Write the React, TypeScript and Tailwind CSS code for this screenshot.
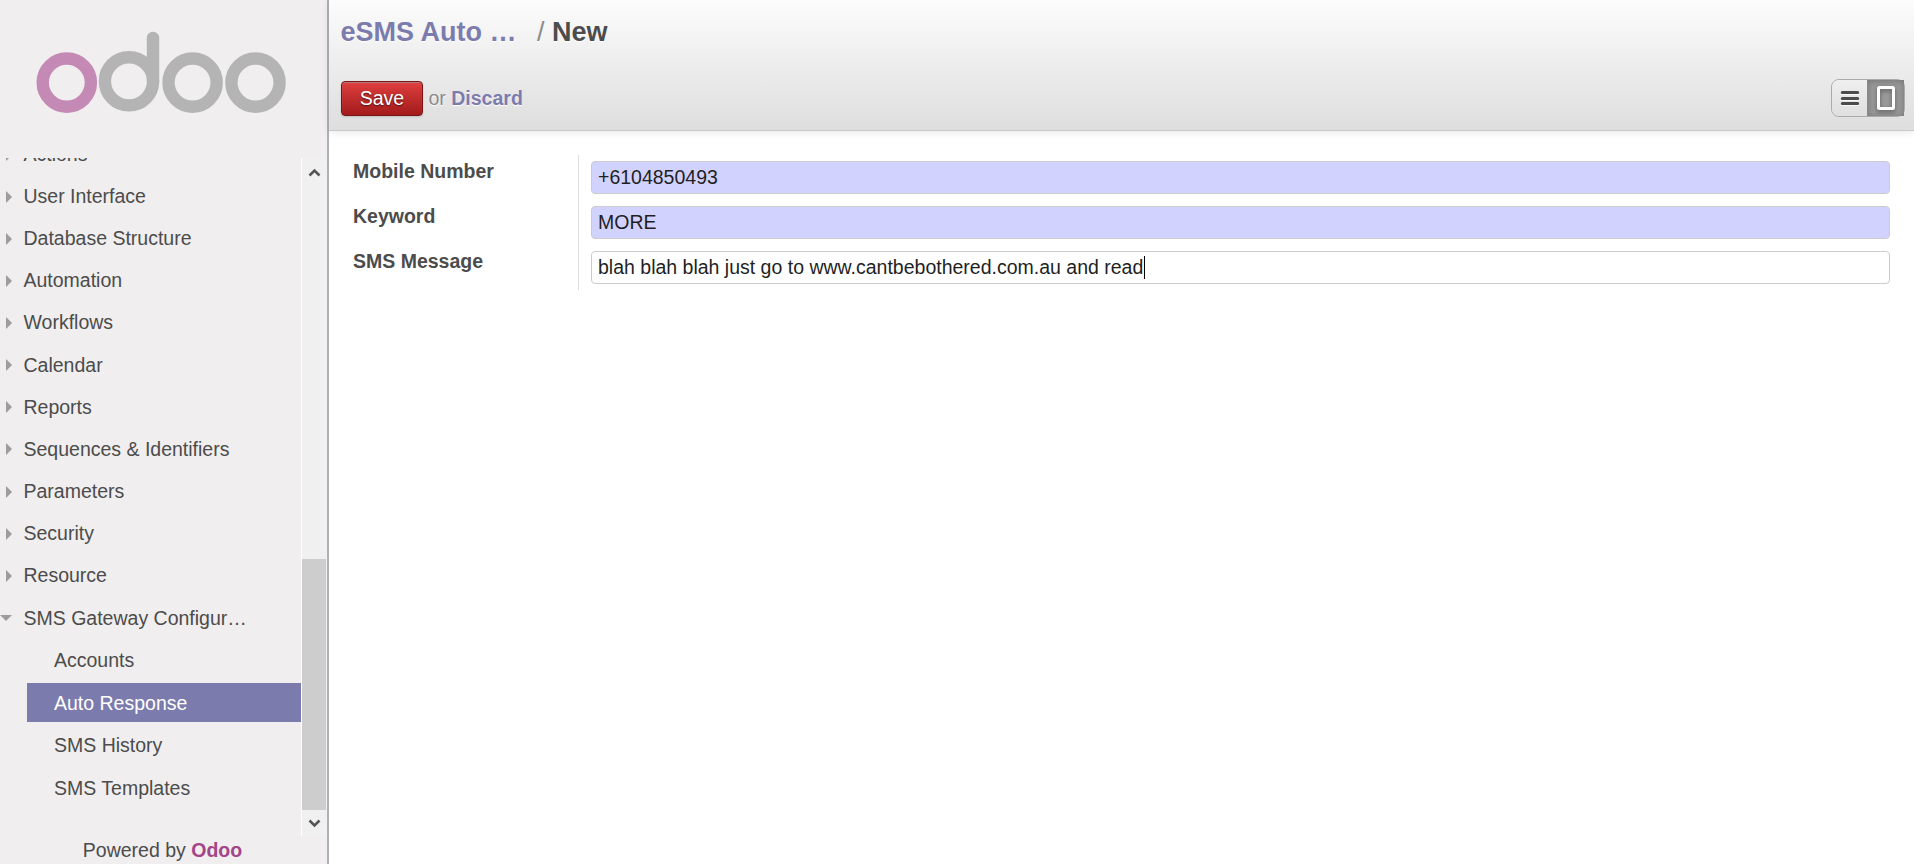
const sections = [
  'User Interface',
  'Database Structure',
  'Automation',
  'Workflows',
  'Calendar',
  'Reports',
  'Sequences & Identifiers',
  'Parameters',
  'Security',
  'Resource',
];

const children = ['Accounts', 'Auto Response', 'SMS History', 'SMS Templates'];

const fields = [
  { label: 'Mobile Number', value: '+6104850493', required: true },
  { label: 'Keyword', value: 'MORE', required: true },
  { label: 'SMS Message', value: 'blah blah blah just go to www.cantbebothered.com.au and read', required: false },
];

function Logo() {
  return (
    <svg width="327" height="158" viewBox="0 0 327 158" fill="none" strokeWidth="12.4" className="block shrink-0">
      <circle cx="66.8" cy="82.6" r="24.1" stroke="#c48ab5" />
      <g stroke="#b4b4b4">
        <circle cx="129" cy="81.3" r="24.1" />
        <path d="M153 38V81.3" strokeLinecap="round" />
        <circle cx="192.6" cy="82.6" r="24.1" />
        <circle cx="255.5" cy="82.6" r="24.1" />
      </g>
    </svg>
  );
}

function RightArrow() {
  return (
    <svg width="12" height="12" viewBox="0 0 12 12" className="mr-[11.5px] shrink-0">
      <path d="M6 0L12 6L6 12Z" fill="#9c9c9c" />
    </svg>
  );
}

function Sidebar() {
  return (
    <aside className="flex w-[329px] shrink-0 flex-col border-r-2 border-[#afafb6] bg-[#f0eeee]">
      <Logo />
      <div className="flex h-[678px] shrink-0">
        <nav className="flex w-[301px] flex-col overflow-hidden">
          <div className="-mt-[24.5px] flex h-[42px] shrink-0 items-center">
            <RightArrow />
            Actions
          </div>
          {sections.map((name) => (
            <div key={name} className="flex h-[42.15px] shrink-0 items-center">
              <RightArrow />
              {name}
            </div>
          ))}
          <div className="flex h-[43px] shrink-0 items-center">
            <svg width="12" height="12" viewBox="0 0 12 12" className="mr-[11.5px] shrink-0">
              <path d="M0 3H12L6 9Z" fill="#9c9c9c" />
            </svg>
            SMS Gateway Configur…
          </div>
          <div className="flex flex-col gap-[3.4px] pt-[0.7px] pl-[27px]">
            {children.map((name) => (
              <div
                key={name}
                className={
                  name === 'Auto Response'
                    ? 'flex h-[39px] items-center bg-[#7c7bad] pt-[2px] pl-[27px] text-white'
                    : 'flex h-[39px] items-center pt-[2px] pl-[27px]'
                }
              >
                {name}
              </div>
            ))}
          </div>
        </nav>
        <div className="flex w-[26px] flex-col items-stretch border-l border-white bg-[#f0f0f0]">
          <svg width="25" height="25" viewBox="0 0 25 25" className="shrink-0">
            <path d="M7.5 17.5L12.5 12.5L17.5 17.5" fill="none" stroke="#555" strokeWidth="2.6" />
          </svg>
          <div className="mt-[376px] mr-px h-[251px] bg-[#cdcdcd]" />
          <svg width="25" height="25" viewBox="0 0 25 25" className="shrink-0">
            <path d="M7.5 10.5L12.5 15.5L17.5 10.5" fill="none" stroke="#555" strokeWidth="2.6" />
          </svg>
        </div>
      </div>
      <footer className="pt-[3px] pr-[2px] text-center leading-[22px]">
        Powered by <b className="text-[#a24689]">Odoo</b>
      </footer>
    </aside>
  );
}

function Header() {
  return (
    <header className="h-[131px] border-b border-[#cacaca] bg-linear-to-b from-[#fcfcfc] to-[#dedede] px-3 shadow-[0_1px_8px_rgba(0,0,0,0.1)] [text-shadow:0_1px_1px_white]">
      <h1 className="-ml-[0.5px] flex h-[81px] pt-[16px] text-[27px] leading-[32px] font-bold whitespace-pre">
        <span className="w-[196.5px] text-[#7c7bad]">eSMS Auto …</span>
        <span className="font-normal text-[#8a8a8a]">/ </span>
        <span>New</span>
      </h1>
      <div className="flex items-start">
        <button className="h-[35px] w-[82px] rounded-[4px] border border-[#7a1416] bg-linear-to-b from-[#df3f3f] to-[#a21a1a] text-white shadow-[0_1px_2px_rgba(0,0,0,0.15),inset_0_1px_1px_rgba(155,155,155,0.7)] [text-shadow:0_1px_2px_rgba(0,0,0,0.6)]">
          Save
        </button>
        <span className="ml-[5.5px] leading-[34px] text-[#8a8a8a]">
          or <b className="text-[#7c7bad]">Discard</b>
        </span>
        <div className="-mt-[2px] ml-auto mr-[-3px] flex h-[38px] w-[74px] rounded-[8px] border border-[#ababab]">
          <div className="flex w-[35px] items-center justify-center rounded-l-[7px] bg-linear-to-b from-[#efefef] to-[#dfdfdf]">
            <svg width="20" height="20" viewBox="0 0 20 20">
              <path d="M2.3 5.3H17.7M2.3 11.3H17.7M2.3 16.3H17.7" stroke="#fff" strokeWidth="3" strokeLinecap="round" />
              <path d="M2.3 4.5H17.7M2.3 10.5H17.7M2.3 15.5H17.7" stroke="#4c4c4c" strokeWidth="3" strokeLinecap="round" />
            </svg>
          </div>
          <div className="flex flex-1 items-center justify-center border-l border-[#8a8a8a] bg-[#999] shadow-[inset_0_1px_6px_rgba(0,0,0,0.25)]">
            <svg width="20" height="26" viewBox="0 0 20 26" className="drop-shadow-[0_2px_2px_rgba(0,0,0,0.4)]">
              <rect x="2.5" y="2.5" width="15" height="21" rx="1" fill="none" stroke="#fff" strokeWidth="3" />
            </svg>
          </div>
        </div>
      </div>
    </header>
  );
}

export default function App() {
  return (
    <div className="flex h-[864px] w-full overflow-hidden bg-white font-['Liberation_Sans',Arial,sans-serif] text-[19.5px] text-[#4c4c4c]">
      <Sidebar />
      <main className="min-w-0 flex-1">
        <Header />
        <form className="mt-6 mr-6 ml-6 flex">
          <div className="flex h-[135px] w-[226px] flex-col border-r border-[#ddd]">
            {fields.map((f) => (
              <label key={f.label} className="h-[45px] pt-[5px] leading-[22px] font-bold">
                {f.label}
              </label>
            ))}
          </div>
          <div className="ml-3 flex flex-1 flex-col gap-3 pt-[6px]">
            {fields.map((f) => (
              <div
                key={f.label}
                className={
                  f.required
                    ? 'flex h-[33px] items-center rounded-[4px] border border-[#ccc] bg-[#d2d2ff] pl-[6px] text-[#1f1f1f]'
                    : 'flex h-[33px] items-center rounded-[4px] border border-[#ccc] bg-white pl-[6px] text-[#1f1f1f]'
                }
              >
                {f.value}
                {!f.required && <span className="ml-px h-[23px] w-px bg-black" />}
              </div>
            ))}
          </div>
        </form>
      </main>
    </div>
  );
}
